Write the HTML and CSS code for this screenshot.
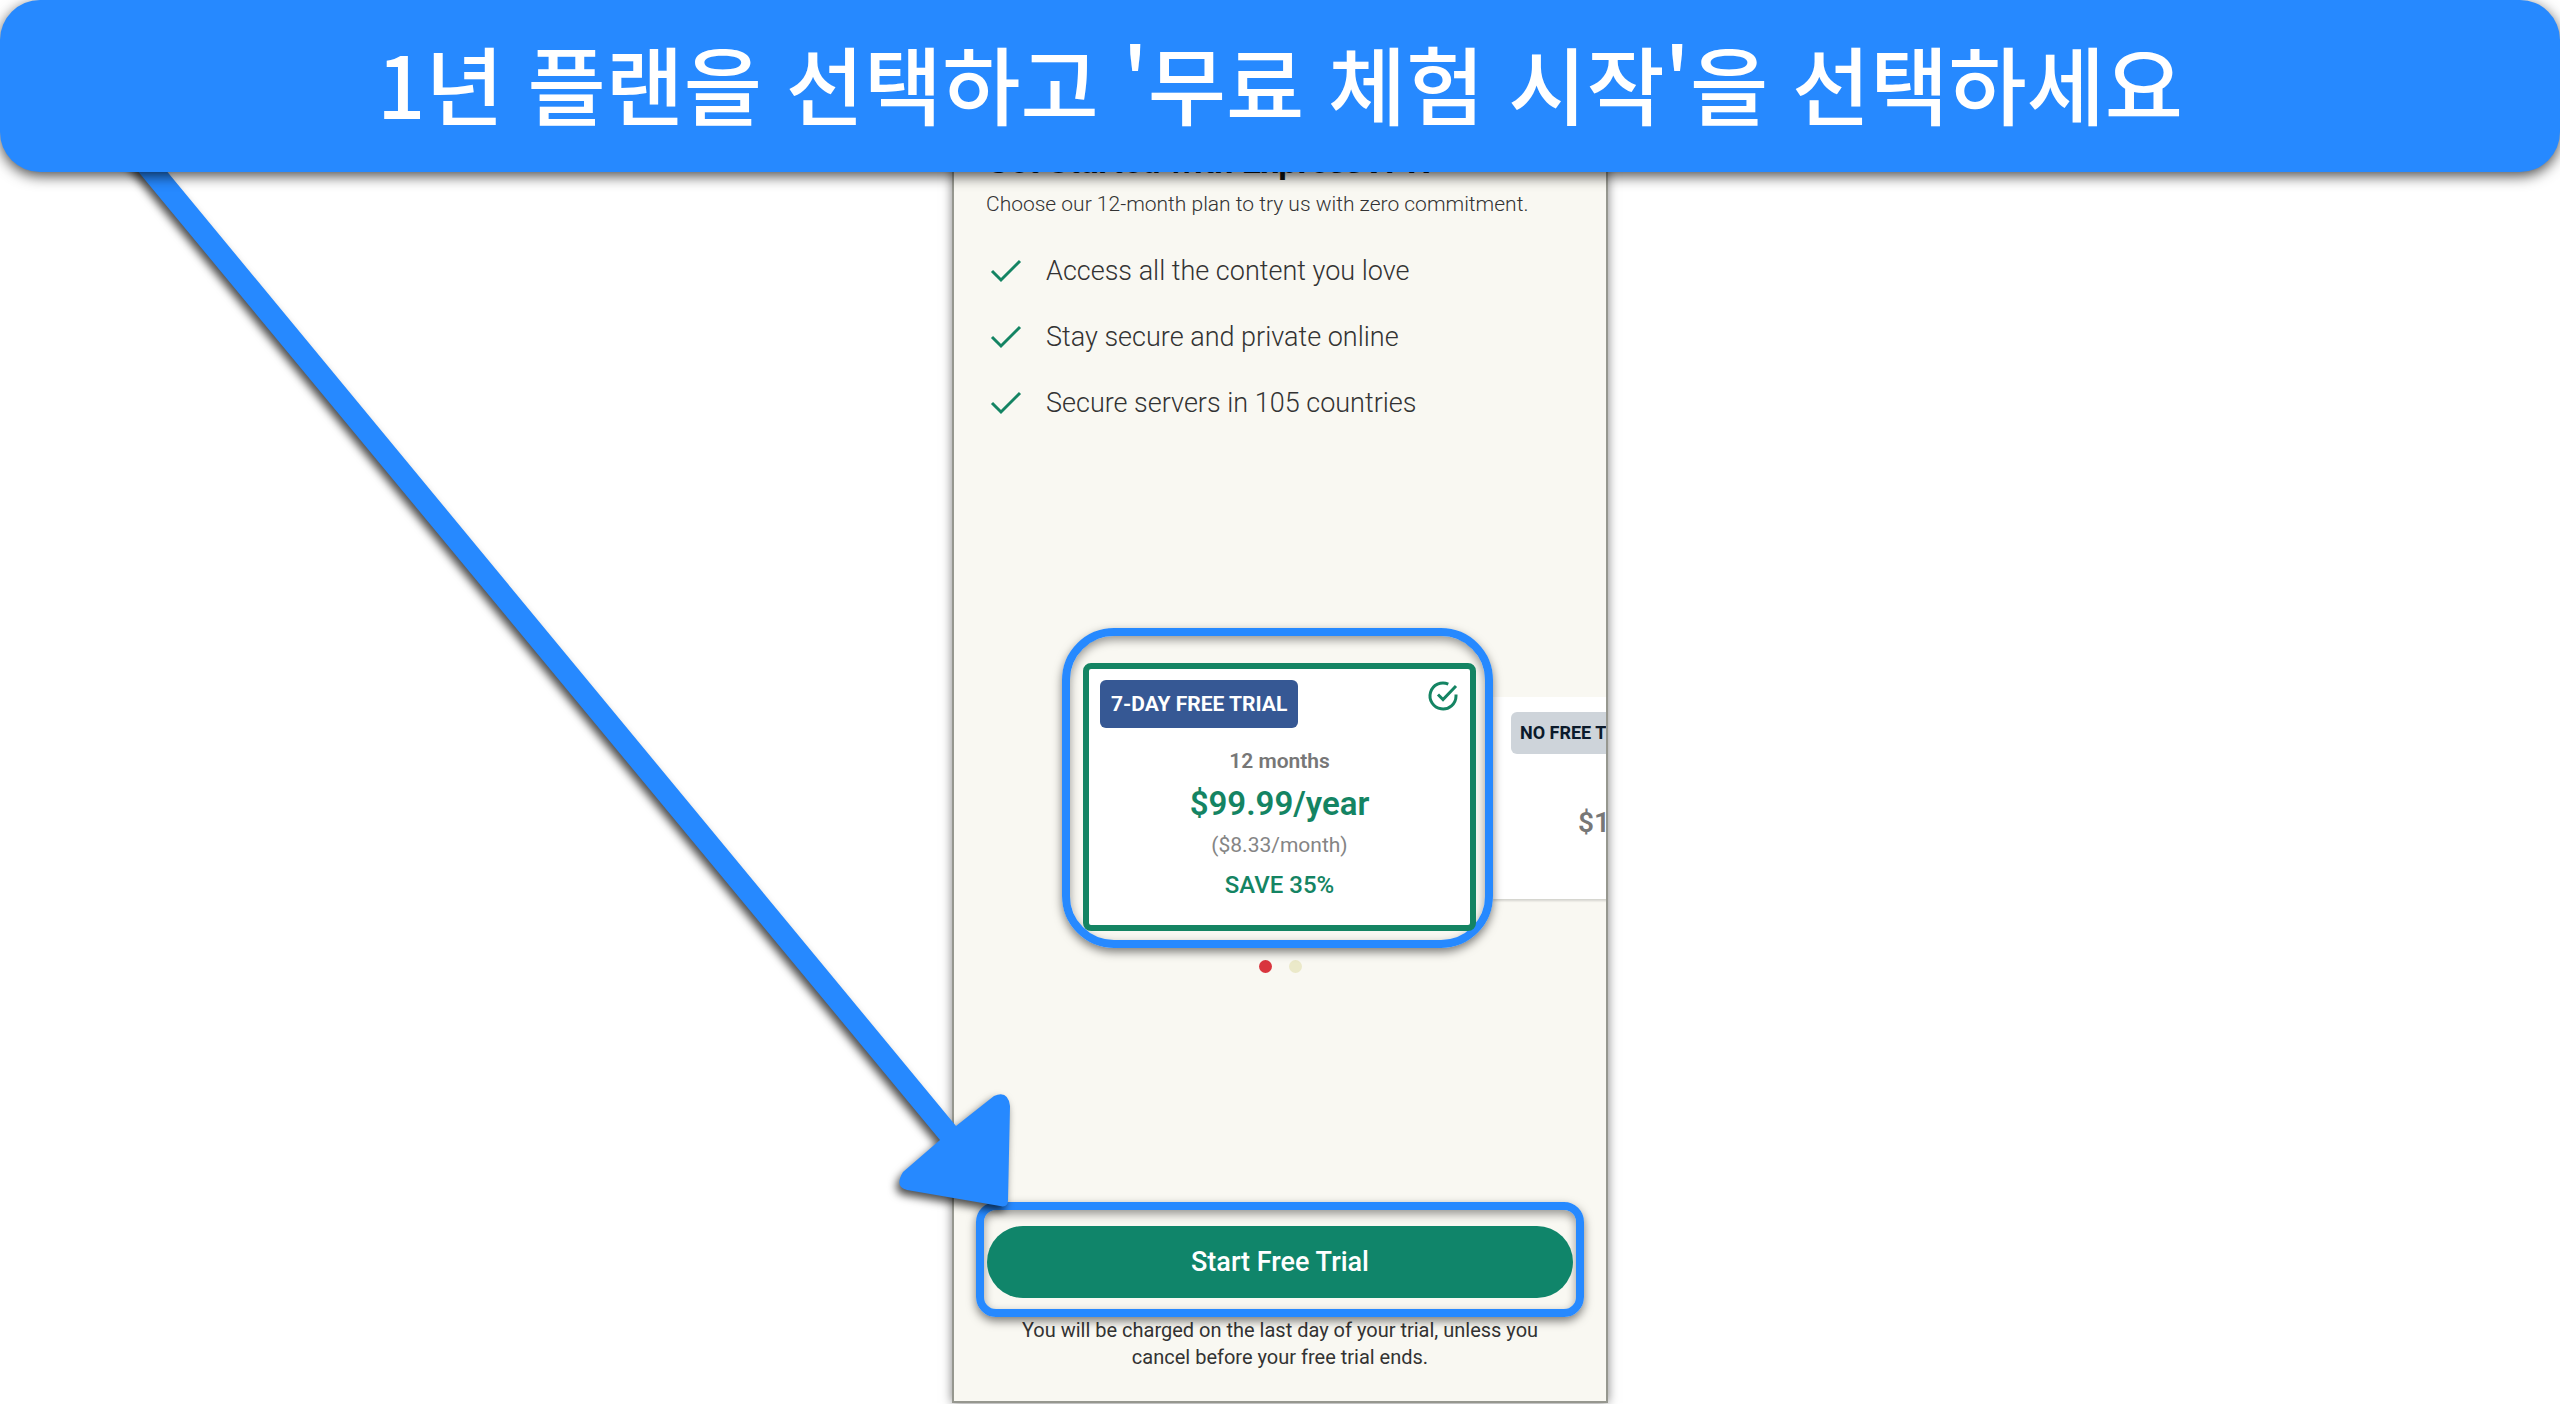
FILE: index.html
```html
<!DOCTYPE html>
<html lang="ko">
<head>
  <meta charset="utf-8">
  <title>ExpressVPN</title>
  <link rel="stylesheet" href="styles.css">
</head>
<body>
  <header class="banner">
    <h1>1년 플랜을 선택하고 '무료 체험 시작'을 선택하세요</h1>
  </header>
  <main class="phone" lang="en">
    <section class="intro">
      <h2>Get Started with ExpressVPN</h2>
      <p>Choose our 12-month plan to try us with zero commitment.</p>
      <ul class="features">
        <li><svg class="tick" viewBox="0 0 32 24"><path d="M2 12l9 9L30 2"/></svg>Access all the content you love</li>
        <li><svg class="tick" viewBox="0 0 32 24"><path d="M2 12l9 9L30 2"/></svg>Stay secure and private online</li>
        <li><svg class="tick" viewBox="0 0 32 24"><path d="M2 12l9 9L30 2"/></svg>Secure servers in 105 countries</li>
      </ul>
    </section>

    <section class="plans">
      <div class="carousel">
        <div class="highlight highlight-plan">
          <article class="plan selected">
            <div class="plan-top">
              <span class="badge">7-DAY FREE TRIAL</span>
              <svg class="chosen" viewBox="0 0 32 32"><path d="M29 14.500v1.500a13 13 0 1 1-7.700-11.900"/><path d="M11 14.500l5 5L29 6"/></svg>
            </div>
            <p class="term">12 months</p>
            <p class="price">$99.99/year</p>
            <p class="monthly">($8.33/month)</p>
            <p class="save">SAVE 35%</p>
          </article>
        </div>
        <article class="plan other">
          <span class="badge">NO FREE TRIAL</span>
          <p class="price">$12.95/month</p>
        </article>
      </div>
      <div class="dots"><span class="dot active"></span><span class="dot"></span></div>
    </section>

    <section class="checkout">
      <div class="highlight highlight-button">
        <button type="button">Start Free Trial</button>
      </div>
      <p>You will be charged on the last day of your trial, unless you cancel before your free trial ends.</p>
    </section>
  </main>

  <!-- arrow from the banner down to the button -->
  <svg class="arrow" width="1100" height="1240" viewBox="0 0 1100 1240">
    <path d="M117 146L940 1140L903 1172Q894 1187 907 1190L1000 1206Q1008 1208 1008 1200L1010 1106Q1008 1090 994 1096L956 1126L146 146Z"/>
  </svg>
</body>
</html>
```

FILE: styles.css
```css
* {
  box-sizing: border-box;
}
body {
  font-family: Roboto, "Noto Sans CJK KR", sans-serif;
  margin: 0;
  min-height: 100vh;
  background-color: #fff;
  position: relative;
  overflow-x: hidden;
}
h1, h2, p, ul {
  margin: 0;
  padding: 0;
}
.banner {
  position: absolute;
  top: 0;
  left: 0;
  right: 0;
  z-index: 3;
  height: 172px;
  padding-bottom: 8px;
  display: flex;
  align-items: center;
  justify-content: center;
  background-color: #2689ff;
  border-radius: 40px;
  box-shadow: 0 4px 14px rgba(0, 0, 0, 0.7);
}
.banner h1 {
  font-family: "Noto Sans CJK KR", sans-serif;
  font-size: 85px;
  font-weight: 500;
  line-height: 120px;
  color: #fff;
}
.phone {
  max-width: 656px;
  height: calc(100vh - 1px);
  min-height: 1200px;
  margin: auto;
  padding: 136px 32px 30px;
  display: flex;
  flex-direction: column;
  justify-content: space-between;
  overflow: hidden;
  background-color: #f9f8f2;
  border: 2px solid #96978f;
  box-shadow: 0 0 10px rgba(0, 0, 0, 0.5);
}
.intro h2 {
  margin-bottom: 2px;
  font-size: 34px;
  line-height: 46px;
  color: #111;
}
.intro p {
  font-size: 21px;
  line-height: 36px;
  font-weight: 300;
  color: #333;
}
.features {
  list-style: none;
  margin-top: 16px;
}
.features li {
  display: flex;
  align-items: center;
  gap: 24px;
  padding-left: 4px;
  height: 66px;
  font-size: 27px;
  font-weight: 300;
  color: #333;
}
.tick {
  width: 32px;
  height: 24px;
  fill: none;
  stroke: #148463;
  stroke-width: 3;
}
.plans {
  margin-bottom: 38px;
}
.carousel {
  display: flex;
  align-items: center;
  padding-left: 76px;
}
.highlight {
  position: relative;
  z-index: 1;
  border: 8px solid #2689ff;
  box-shadow: 0 4px 10px rgba(0, 0, 0, 0.5), inset 0 4px 10px rgba(0, 0, 0, 0.4);
}
.highlight-plan {
  flex: none;
  width: 431px;
  padding: 27px 9px 9px 13px;
  border-radius: 52px;
}
.plan {
  background-color: #fff;
  text-align: center;
}
.selected {
  height: 268px;
  padding: 11px;
  border: 6px solid #148463;
  border-radius: 8px;
}
.plan-top {
  display: flex;
  justify-content: space-between;
  align-items: flex-start;
}
.badge {
  display: inline-block;
  border-radius: 6px;
  white-space: nowrap;
  font-weight: 700;
}
.selected .badge {
  padding: 0 11px;
  font-size: 21px;
  line-height: 48px;
  color: #fff;
  background-color: #365894;
}
.chosen {
  width: 32px;
  height: 32px;
  fill: none;
  stroke: #148463;
  stroke-width: 3;
}
.term {
  margin-top: 16px;
  font-size: 21px;
  line-height: 34px;
  font-weight: 600;
  color: #777;
}
.price {
  font-weight: 600;
}
.selected .price {
  font-size: 33px;
  line-height: 52px;
  color: #148463;
}
.monthly {
  font-size: 21px;
  line-height: 30px;
  color: #858585;
}
.save {
  font-size: 24px;
  line-height: 50px;
  font-weight: 500;
  color: #148463;
}
.other {
  flex: none;
  width: 340px;
  height: 202px;
  margin-top: 20px;
  padding: 15px 18px;
  text-align: left;
  box-shadow: 0 2px 2px rgba(0, 0, 0, 0.15);
}
.other .badge {
  padding: 0 9px;
  font-size: 18px;
  line-height: 42px;
  color: #0b1a2b;
  background-color: #ced4da;
}
.other .price {
  margin-top: 44px;
  padding-left: 67px;
  font-size: 28px;
  line-height: 50px;
  color: #777;
}
.dots {
  display: flex;
  justify-content: center;
  gap: 17px;
  margin-top: 12px;
}
.dot {
  width: 13px;
  height: 13px;
  border-radius: 50%;
  background-color: #ebe9c9;
}
.dot.active {
  background-color: #d9353e;
}
.highlight-button {
  margin: 0 -10px;
  padding: 16px 3px 11px;
  border-radius: 20px;
}
.checkout button {
  width: 100%;
  height: 72px;
  border: none;
  border-radius: 36px;
  background-color: #10856a;
  color: #fff;
  font-family: inherit;
  font-size: 27px;
  font-weight: 500;
  cursor: pointer;
}
.checkout p {
  padding: 0 28px;
  font-size: 20px;
  line-height: 27px;
  text-align: center;
  color: #333;
}
.arrow {
  position: absolute;
  top: 0;
  left: 0;
  z-index: 2;
  fill: #2689ff;
  filter: drop-shadow(-3px 5px 4px rgba(0, 0, 0, 0.7));
  pointer-events: none;
}
```
